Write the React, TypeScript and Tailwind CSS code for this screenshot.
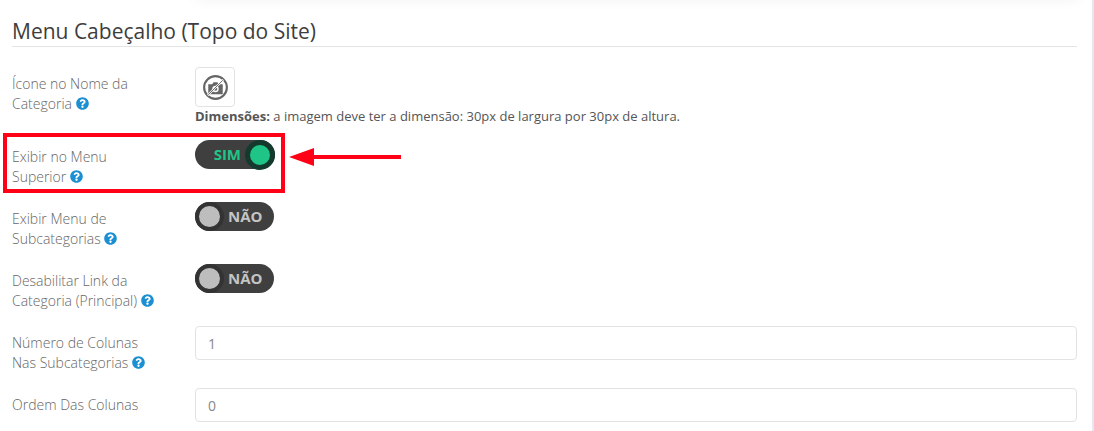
import React from 'react';

const Help: React.FC = () => (
  <svg viewBox="0 0 512 512" className="inline-block w-[13px] h-[13px] align-[-1px] fill-[#1b8fd2]">
    <path d="M504 256c0 137-111 248-248 248S8 393 8 256 119 8 256 8s248 111 248 248zM262.700 90c-54.500 0-89.300 23-116.500 63.800-3.500 5.300-2.400 12.400 2.700 16.300l34.700 26.300c5.200 3.900 12.600 3 16.700-2.100 17.900-22.700 30.100-35.800 57.300-35.800 20.400 0 45.700 13.100 45.700 33 0 15-12.400 22.700-32.600 34-23.600 13.200-54.800 29.700-54.800 70.900V300c0 6.600 5.400 12 12 12h56c6.600 0 12-5.400 12-12v-1.300c0-28.600 83.500-29.800 83.500-107.200 0-58.300-60.500-102.500-117.300-102.500zM256 339c-25.500 0-46.200 20.700-46.200 46.200 0 25.500 20.700 46.200 46.200 46.200s46.200-20.700 46.200-46.200c0-25.500-20.700-46.200-46.200-46.200z" />
  </svg>
);

const Toggle: React.FC<{ on?: boolean }> = ({ on }) =>
  on ? (
    <div className="flex items-center justify-end w-[80px] h-[29px] rounded-full bg-[#3f3f3f]">
      <span className="text-[15px] font-bold text-[#1fc587] mr-[4px]">SIM</span>
      <span className="w-[30px] h-[30px] shrink-0 rounded-full bg-[#1fc587] border-[5px] border-[#143a2e]" />
    </div>
  ) : (
    <div className="flex items-center w-[79px] h-[29px] rounded-full bg-[#3f3f3f]">
      <span className="w-[29px] h-[29px] shrink-0 rounded-full bg-[#bdbdbd] border-[4px] border-[#333333]" />
      <span className="text-[15px] font-bold text-[#c4c4c4] ml-[4px]">NÃO</span>
    </div>
  );

const Row: React.FC<{ children: React.ReactNode; label: React.ReactNode }> = ({ label, children }) => (
  <div className="flex h-[62px]">
    <label className="w-[183px] shrink-0 text-[14px] leading-[20px] font-light text-[#666666] pt-[7px]">{label}</label>
    <div className="flex-1">{children}</div>
  </div>
);

const Field: React.FC<{ value: string }> = ({ value }) => (
  <input
    readOnly
    value={value}
    className="block w-full h-[34px] px-3 text-[14px] text-[#888888] bg-white border border-[#e2e2e2] rounded-[4px] outline-none"
  />
);

export default function App() {
  return (
    <div className="relative h-[431px] overflow-hidden bg-white font-['Open_Sans',sans-serif] flex">
      <div className="absolute -top-[20px] left-[195px] right-[14px] h-[20px] shadow-[0_0_14px_rgba(0,0,0,0.05)]" />
      <main className="flex-1 pl-3 pr-[15px]">
        <h2 className="text-[21px] leading-[28px] text-[#3d3d3d] pt-[17px] pb-[1px] border-b border-[#e4e4e4]">
          Menu Cabeçalho (Topo do Site)
        </h2>
        <div className="pt-[20px]">
          <div className="flex h-[73px]">
            <label className="w-[183px] shrink-0 text-[14px] leading-[20px] font-light text-[#666666] pt-[7px]">
              Ícone no Nome da
              <br />
              Categoria <Help />
            </label>
            <div>
              <div className="flex items-center justify-center w-[40px] h-[40px] border border-[#e2e2e2] rounded-[4px]">
                <svg viewBox="0 0 28 28" className="w-[27px] h-[27px]" fill="none">
                  <circle cx="14" cy="14" r="11.800" stroke="#666666" strokeWidth="2.200" />
                  <path d="M6.500 10.500h4l1.500-2h4l1.500 2h4v10.500h-15z" fill="#666666" />
                  <circle cx="14" cy="15.500" r="3.300" fill="#ffffff" />
                  <circle cx="14" cy="15.500" r="1.900" fill="#666666" />
                  <path d="M6 22L22 6" stroke="#ffffff" strokeWidth="2" />
                  <path d="M6.500 21.500L21.500 6.500" stroke="#666666" strokeWidth="1" />
                </svg>
              </div>
              <p className="text-[13px] leading-[18px] text-[#555555]">
                <b>Dimensões:</b> a imagem deve ter a dimensão: 30px de largura por 30px de altura.
              </p>
            </div>
          </div>
          <Row
            label={
              <>
                Exibir no Menu
                <br />
                Superior <Help />
              </>
            }
          >
            <Toggle on />
          </Row>
          <Row
            label={
              <>
                Exibir Menu de
                <br />
                Subcategorias <Help />
              </>
            }
          >
            <Toggle />
          </Row>
          <Row
            label={
              <>
                Desabilitar Link da
                <br />
                Categoria (Principal) <Help />
              </>
            }
          >
            <Toggle />
          </Row>
          <Row
            label={
              <>
                Número de Colunas
                <br />
                Nas Subcategorias <Help />
              </>
            }
          >
            <Field value="1" />
          </Row>
          <Row label="Ordem Das Colunas">
            <Field value="0" />
          </Row>
        </div>
      </main>
      <div className="w-[2px] shrink-0 bg-[#e8e6ef]" />

      {/* annotation over the screenshot */}
      <div className="absolute left-[3px] top-[133px] w-[282px] h-[60px] border-[4px] border-[#ff0016]" />
      <svg className="absolute left-[288px] top-[147px]" width="114" height="20" viewBox="0 0 114 20">
        <path d="M1 10L26 1V8H113V12H26V19Z" fill="#ff0016" />
      </svg>
    </div>
  );
}
